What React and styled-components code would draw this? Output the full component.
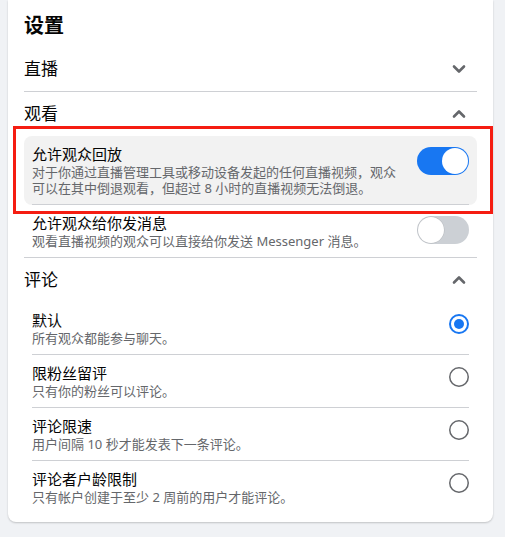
import React from 'react';
import styled, { createGlobalStyle } from 'styled-components';

const GlobalStyle = createGlobalStyle`
  body {
    margin: 0;
    background: #f0f2f5;
    font-family: "Noto Sans", "Noto Sans CJK SC", sans-serif;
    color: #050505;
  }
`;

const Page = styled.div`
  padding: 0 12px 0 8px;
  min-height: 537px;
`;

const Card = styled.div`
  background: #fff;
  border-radius: 0 0 8px 8px;
  box-shadow: 0 1px 2px rgba(0, 0, 0, 0.2);
  padding: 14px 16px 9px;
`;

const Heading = styled.h2`
  margin: 0 0 9px;
  font-size: 20px;
  line-height: 24px;
  font-weight: 700;
`;

const Section = styled.div`
  border-bottom: ${p => (p.$divided ? '1px solid #ced0d4' : 'none')};
`;

const SectionHeader = styled.div`
  display: flex;
  align-items: center;
  justify-content: space-between;
  height: 44px;
`;

const SectionLabel = styled.span`
  font-size: 17px;
  line-height: 20px;
`;

const ChevronIcon = styled.svg`
  width: 16px;
  height: 16px;
  margin-right: 10px;
`;

const Row = styled.div`
  position: relative;
  padding: 0 8px;
  border-radius: 8px;
  background: ${p => (p.$highlighted ? '#f2f2f2' : 'transparent')};
`;

const RowInner = styled.div`
  display: flex;
  align-items: flex-start;
  gap: 12px;
  padding: 8px 0;
  border-bottom: ${p => (p.$last ? 'none' : '1px solid #ced0d4')};
`;

const RowText = styled.div`
  flex: 1;
  min-width: 0;
`;

const RowTitle = styled.div`
  font-size: 15px;
  line-height: 20px;
`;

const RowDesc = styled.div`
  font-size: 13px;
  line-height: 16px;
  color: #65676b;
`;

const Annotation = styled.div`
  position: absolute;
  top: -10px;
  left: -11px;
  right: -16px;
  bottom: -9px;
  border: 3px solid #f51d12;
  pointer-events: none;
`;

const Track = styled.div`
  flex: none;
  display: flex;
  align-items: center;
  justify-content: ${p => (p.$on ? 'flex-end' : 'flex-start')};
  width: 52px;
  height: 28px;
  box-sizing: border-box;
  margin-top: 3px;
  padding: 1px;
  border-radius: 14px;
  background: ${p => (p.$on ? '#1877f2' : '#ccd0d5')};
`;

const Knob = styled.div`
  width: 26px;
  height: 26px;
  border-radius: 50%;
  background: #fff;
  box-shadow: ${p => (p.$on ? 'none' : '0 0 0 0.5px rgba(0,0,0,0.12)')};
`;

const RadioIcon = styled.svg`
  flex: none;
  width: 20px;
  height: 20px;
  margin-top: 4px;
`;

const Chevron = ({ up }) => (
  <ChevronIcon viewBox="0 0 16 16">
    <polyline
      points={up ? '3,10.5 8,5.5 13,10.5' : '3,5.5 8,10.5 13,5.5'}
      fill="none"
      stroke="#65676b"
      strokeWidth="2.6"
      strokeLinecap="round"
      strokeLinejoin="round"
    />
  </ChevronIcon>
);

const Toggle = ({ on }) => (
  <Track $on={on}>
    <Knob $on={on} />
  </Track>
);

const Radio = ({ checked }) => (
  <RadioIcon viewBox="0 0 20 20">
    {checked ? (
      <>
        <circle cx="10" cy="10" r="9" fill="none" stroke="#1877f2" strokeWidth="2" />
        <circle cx="10" cy="10" r="5" fill="#1877f2" />
      </>
    ) : (
      <circle cx="10" cy="10" r="9.25" fill="none" stroke="#65676b" strokeWidth="1.5" />
    )}
  </RadioIcon>
);

const SettingRow = ({ title, desc, control, last, highlighted }) => (
  <Row $highlighted={highlighted}>
    <RowInner $last={last}>
      <RowText>
        <RowTitle>{title}</RowTitle>
        <RowDesc>{desc}</RowDesc>
      </RowText>
      {control}
    </RowInner>
    {highlighted && <Annotation />}
  </Row>
);

const commentOptions = [
  { title: '默认', desc: '所有观众都能参与聊天。', checked: true },
  { title: '限粉丝留评', desc: '只有你的粉丝可以评论。' },
  { title: '评论限速', desc: '用户间隔 10 秒才能发表下一条评论。' },
  { title: '评论者户龄限制', desc: '只有帐户创建于至少 2 周前的用户才能评论。' },
];

const App = () => (
  <Page>
    <GlobalStyle />
    <Card>
      <Heading>设置</Heading>

      <Section $divided>
        <SectionHeader>
          <SectionLabel>直播</SectionLabel>
          <Chevron />
        </SectionHeader>
      </Section>

      <Section $divided>
        <SectionHeader>
          <SectionLabel>观看</SectionLabel>
          <Chevron up />
        </SectionHeader>
        <SettingRow
          highlighted
          title='允许观众回放'
          desc='对于你通过直播管理工具或移动设备发起的任何直播视频，观众可以在其中倒退观看，但超过 8 小时的直播视频无法倒退。'
          control={<Toggle on />}
        />
        <SettingRow
          last
          title='允许观众给你发消息'
          desc='观看直播视频的观众可以直接给你发送 Messenger 消息。'
          control={<Toggle />}
        />
      </Section>

      <Section>
        <SectionHeader>
          <SectionLabel>评论</SectionLabel>
          <Chevron up />
        </SectionHeader>
        {commentOptions.map((opt, i) => (
          <SettingRow
            key={opt.title}
            title={opt.title}
            desc={opt.desc}
            last={i === commentOptions.length - 1}
            control={<Radio checked={opt.checked} />}
          />
        ))}
      </Section>
    </Card>
  </Page>
);

export default App;
